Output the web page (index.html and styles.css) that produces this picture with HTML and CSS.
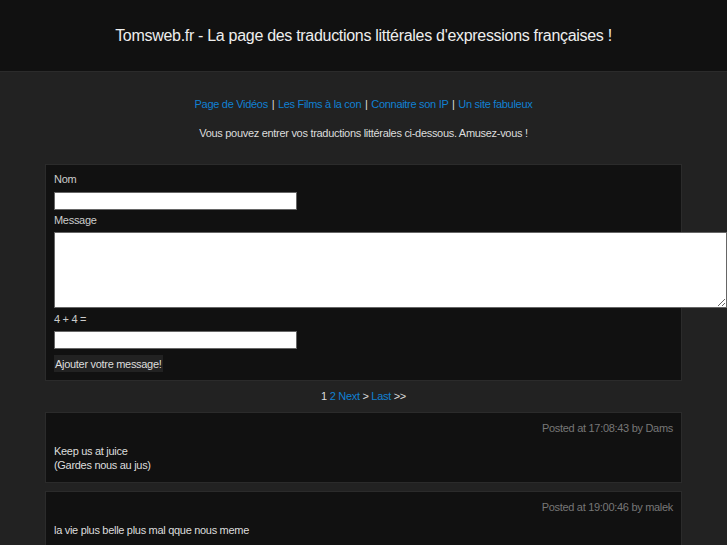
FILE: index.html
```html
<!DOCTYPE html>
<html lang="fr">
<head>
  <meta charset="UTF-8">
  <title>Tomsweb.fr - Traductions littérales</title>
  <link rel="stylesheet" href="styles.css">
</head>
<body>
  <header class="top">
    <h1>Tomsweb.fr - La page des traductions littérales d'expressions françaises !</h1>
  </header>
  <nav class="links">
    <a href="#">Page de Vidéos</a> <span class="sep">|</span> <a href="#">Les Films à la con</a> <span class="sep">|</span> <a href="#">Connaitre son IP</a> <span class="sep">|</span> <a href="#">Un site fabuleux</a>
  </nav>
  <p class="intro">Vous pouvez entrer vos traductions littérales ci-dessous. Amusez-vous !</p>
  <div class="wrap">
    <form class="box guest-form">
      <label for="nom">Nom</label>
      <input type="text" id="nom" class="field">
      <label for="msg">Message</label>
      <textarea id="msg"></textarea>
      <label for="captcha">4 + 4 =</label>
      <input type="text" id="captcha" class="field">
      <button type="button">Ajouter votre message!</button>
    </form>
    <div class="pages">1 <a href="#">2</a> <a href="#">Next</a> &gt; <a href="#">Last</a> &gt;&gt;</div>
    <div class="box post">
      <div class="meta">Posted at 17:08:43 by Dams</div>
      <div class="text">Keep us at juice<br>(Gardes nous au jus)</div>
    </div>
    <div class="box post">
      <div class="meta">Posted at 19:00:46 by malek</div>
      <div class="text">la vie plus belle plus mal qque nous meme</div>
    </div>
  </div>
</body>
</html>
```

FILE: styles.css
```css
body {
  background-color: #222;
  color: #ddd;
  margin: 0;
  font-family: 'Liberation Sans', Arial, sans-serif;
  font-size: 11px;
  line-height: 14px;
  letter-spacing: -0.3px;
}
a {
  color: #1180d2;
  text-decoration: none;
}
.top {
  background-color: #111;
  border-bottom: 1px solid #2b2b2b;
  height: 71px;
  display: flex;
  align-items: center;
  justify-content: center;
}
.top h1 {
  margin: 0;
  font-size: 16px;
  font-weight: normal;
  color: #eee;
}
.links {
  text-align: center;
  margin-top: 25px;
}
.links .sep {
  padding: 0 1px;
}
.intro {
  text-align: center;
  margin: 15px 0 0;
}
.wrap {
  width: 637px;
  margin: 24px auto 0;
}
.box {
  background-color: #111;
  border: 1px solid #2b2b2b;
}
.guest-form {
  display: flex;
  flex-direction: column;
  align-items: flex-start;
  padding: 7px 8px 8px;
}
.guest-form label {
  color: #ccc;
  margin-bottom: 5px;
}
.guest-form .field {
  box-sizing: border-box;
  width: 243px;
  height: 18px;
  margin: 1px 0 3px;
  border: 1px solid #666;
  background: #fff;
  padding: 0 2px;
}
.guest-form textarea {
  box-sizing: border-box;
  width: 673px;
  height: 76px;
  margin: 0 0 4px;
  border: 1px solid #666;
  background: #fff;
}
#captcha {
  margin: 0 0 6px;
}
.guest-form button {
  background-color: #222;
  color: #ddd;
  border: 0;
  font: inherit;
  letter-spacing: inherit;
  height: 17px;
  padding: 0 1px;
}
.pages {
  text-align: center;
  margin: 8px 0 9px;
}
.post {
  padding: 8px 8px 10px;
  margin-bottom: 8px;
}
.post .meta {
  text-align: right;
  color: #777;
  margin-bottom: 9px;
}
```
